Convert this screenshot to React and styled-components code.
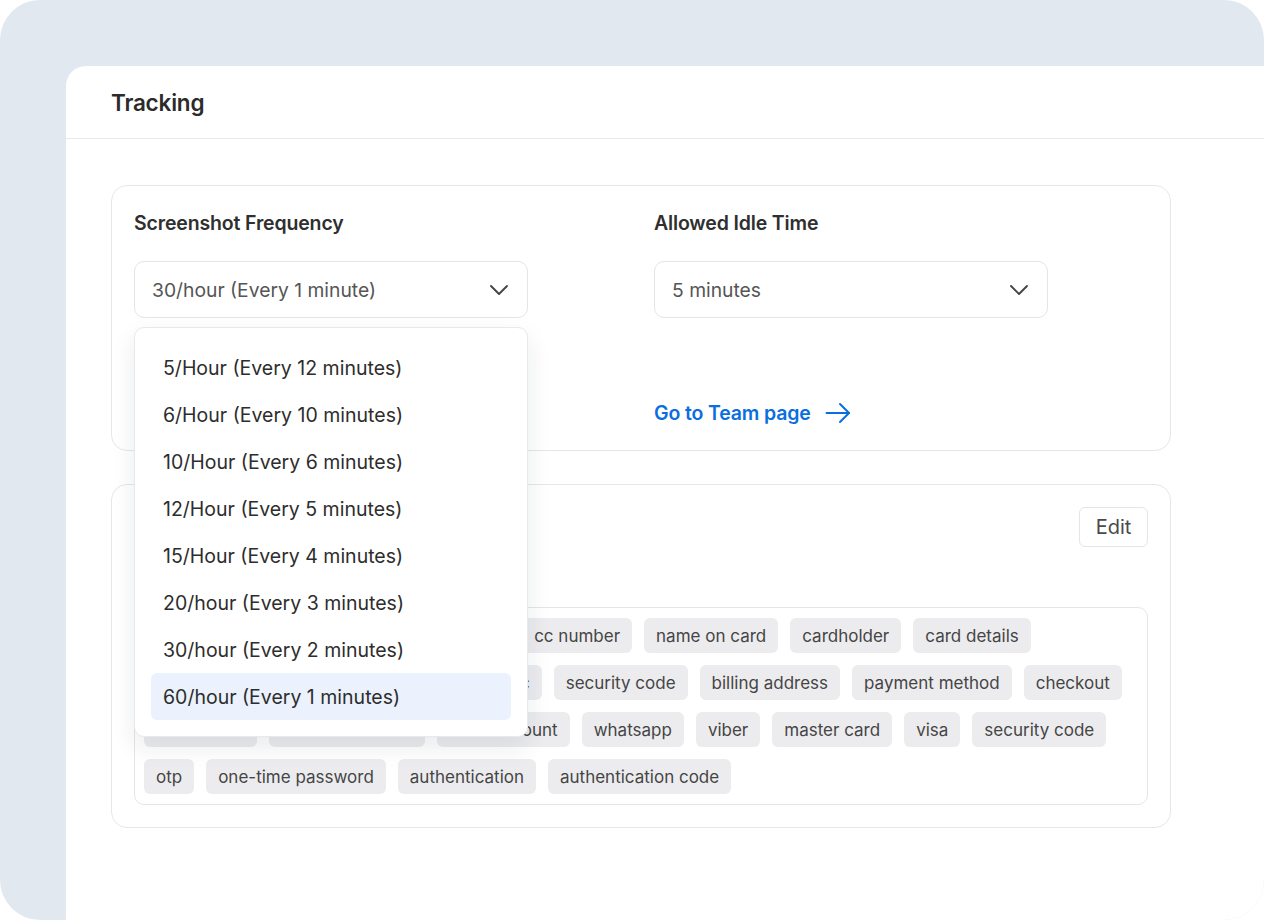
import React from "react";
import styled, { createGlobalStyle } from "styled-components";

const GlobalStyle = createGlobalStyle`
    html, body {
        margin: 0;
        padding: 0;
        background: #ffffff;
        font-family: Inter, "Noto Sans", "Liberation Sans", sans-serif;
        -webkit-font-smoothing: antialiased;
    }
    * {
        box-sizing: border-box;
    }
`;

const Frame = styled.div`
    width: 1264px;
    height: 920px;
    background: #e2e8f0;
    border-radius: 40px;
    overflow: hidden;
    padding: 66px 0 0 66px;
`;

const Panel = styled.div`
    width: 1240px;
    height: 100%;
    background: #ffffff;
    border-radius: 20px 0 0 0;
`;

const PanelHeader = styled.div`
    height: 73px;
    padding: 0 45px;
    display: flex;
    align-items: center;
    border-bottom: 1px solid #e8e9eb;

    h1 {
        margin: 0;
        font-size: 22.5px;
        font-weight: 600;
        color: #2b2b2b;
        letter-spacing: -0.2px;
    }
`;

const PanelBody = styled.div`
    width: 1150px;
    padding: 46px 45px 0 45px;
    display: flex;
    flex-direction: column;
    gap: 33px;
`;

const Card = styled.div`
    position: relative;
    border: 1px solid #e6e7e9;
    border-radius: 16px;
    padding: ${(p) => p.$padding || "22px"};
`;

const Columns = styled.div`
    display: grid;
    grid-template-columns: 520px 1fr;
`;

const Field = styled.div`
    position: relative;
    display: flex;
    flex-direction: column;
`;

const Label = styled.div`
    font-size: 19.5px;
    line-height: 24px;
    font-weight: 600;
    color: #2f2f2f;
    letter-spacing: -0.15px;
`;

const Select = styled.div`
    margin-top: 26px;
    width: 394px;
    height: 57px;
    border: 1px solid #e4e5e7;
    border-radius: 10px;
    display: flex;
    align-items: center;
    justify-content: space-between;
    padding: 0 18px 0 17px;
    font-size: 19.3px;
    color: #555555;
    background: #ffffff;
`;

const Chevron = () => (
    <svg width="20" height="12" viewBox="0 0 20 12" fill="none" stroke="#444444" strokeWidth="1.9" strokeLinecap="round" strokeLinejoin="round">
        <path d="M2 2 l8 8 l8 -8" />
    </svg>
);

const Menu = styled.div`
    position: absolute;
    top: 116px;
    left: 0;
    z-index: 10;
    width: 394px;
    padding: 16px;
    background: #ffffff;
    border: 1px solid #e8e9eb;
    border-radius: 10px;
    box-shadow: 0 10px 24px rgba(20, 30, 50, 0.09);
`;

const MenuItem = styled.div`
    height: 47px;
    display: flex;
    align-items: center;
    padding: 0 12px;
    border-radius: 6px;
    font-size: 19.5px;
    color: #2d2d2d;
    background: ${(p) => (p.$active ? "#ebf2fe" : "transparent")};
`;

const LinkRow = styled.a`
    margin-top: 83px;
    display: inline-flex;
    align-items: center;
    gap: 14px;
    font-size: 19.5px;
    line-height: 24px;
    font-weight: 600;
    color: #0b6ee0;
    text-decoration: none;
    letter-spacing: -0.15px;
`;

const Arrow = () => (
    <svg width="26" height="22" viewBox="0 0 26 22" fill="none" stroke="#0b6ee0" strokeWidth="2" strokeLinecap="round" strokeLinejoin="round">
        <path d="M1.5 11 H24" />
        <path d="M15 2 L24 11 L15 20" />
    </svg>
);

const CardTop = styled.div`
    display: flex;
    justify-content: space-between;
    align-items: flex-start;
    height: 100px;
`;

const TitleBlock = styled.div`
    display: flex;
    flex-direction: column;
    gap: 10px;
    padding-top: 8px;

    p {
        margin: 0;
        font-size: 15px;
        color: #777;
    }
`;

const EditButton = styled.button`
    height: 40px;
    width: 69px;
    border: 1px solid #e4e5e7;
    border-radius: 6px;
    background: #ffffff;
    font-family: inherit;
    font-size: 20px;
    color: #4a4a4a;
    padding: 0;
`;

const TagBox = styled.div`
    border: 1px solid #e4e5e7;
    border-radius: 10px;
    padding: 10px 9px;
    display: flex;
    flex-wrap: wrap;
    gap: 12px 12px;
`;

const Tag = styled.span`
    height: 35px;
    display: inline-flex;
    align-items: center;
    padding: 0 12px;
    border-radius: 6px;
    background: #ececef;
    font-size: 17px;
    color: #454545;
    white-space: nowrap;
`;

const options = [
    "5/Hour (Every 12 minutes)",
    "6/Hour (Every 10 minutes)",
    "10/Hour (Every 6 minutes)",
    "12/Hour (Every 5 minutes)",
    "15/Hour (Every 4 minutes)",
    "20/hour (Every 3 minutes)",
    "30/hour (Every 2 minutes)",
    "60/hour (Every 1 minutes)",
];

const keywords = [
    "credit card",
    "debit card",
    "card number",
    "cc number",
    "name on card",
    "cardholder",
    "card details",
    "expiration date",
    "expiry date",
    "cvv",
    "cvc",
    "security code",
    "billing address",
    "payment method",
    "checkout",
    "bank cards",
    "account number",
    "bank account",
    "whatsapp",
    "viber",
    "master card",
    "visa",
    "security code",
    "otp",
    "one-time password",
    "authentication",
    "authentication code",
];

export default function App() {
    return (
        <>
            <GlobalStyle />
            <Frame>
                <Panel>
                    <PanelHeader>
                        <h1>Tracking</h1>
                    </PanelHeader>
                    <PanelBody>
                        <Card $padding="25px 22px 25px 22px">
                            <Columns>
                                <Field>
                                    <Label>Screenshot Frequency</Label>
                                    <Select>
                                        <span>30/hour (Every 1 minute)</span>
                                        <Chevron />
                                    </Select>
                                    <Menu>
                                        {options.map((o) => (
                                            <MenuItem key={o} $active={o.startsWith("60")}>
                                                {o}
                                            </MenuItem>
                                        ))}
                                    </Menu>
                                </Field>
                                <Field>
                                    <Label>Allowed Idle Time</Label>
                                    <Select>
                                        <span>5 minutes</span>
                                        <Chevron />
                                    </Select>
                                    <div>
                                        <LinkRow href="#">
                                            Go to Team page
                                            <Arrow />
                                        </LinkRow>
                                    </div>
                                </Field>
                            </Columns>
                        </Card>
                        <Card>
                            <CardTop>
                                <TitleBlock>
                                    <Label>Blurred Keywords</Label>
                                    <p>Screenshots with these words are blurred.</p>
                                </TitleBlock>
                                <EditButton>Edit</EditButton>
                            </CardTop>
                            <TagBox>
                                {keywords.map((k, i) => (
                                    <Tag key={i}>{k}</Tag>
                                ))}
                            </TagBox>
                        </Card>
                    </PanelBody>
                </Panel>
            </Frame>
        </>
    );
}
